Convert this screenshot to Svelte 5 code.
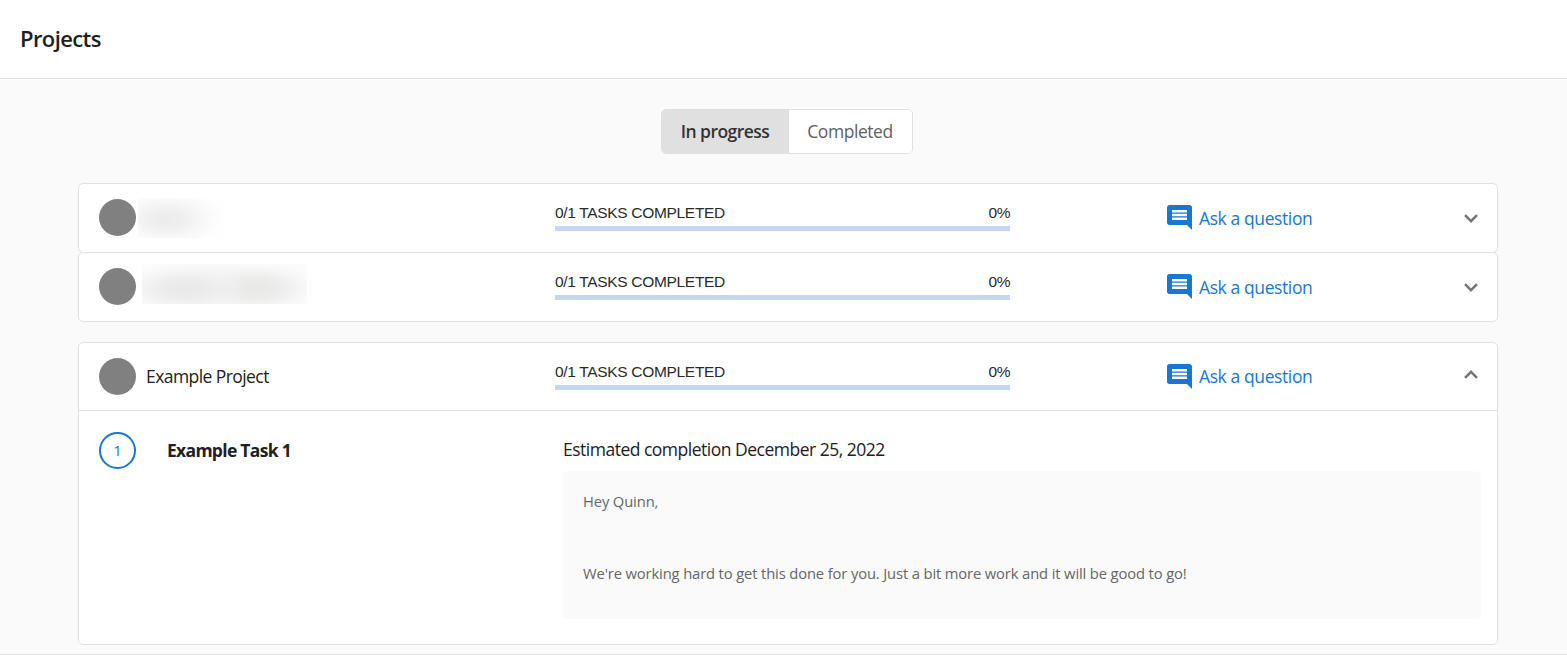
<script>
  const pending = [
    { id: 'a', hidden: 'short' },
    { id: 'b', hidden: 'long' }
  ];
  const paragraphs = [
    'Hey Quinn,',
    "We're working hard to get this done for you. Just a bit more work and it will be good to go!"
  ];
</script>

{#snippet row(name, hidden, open)}
  <div class="row">
    <div class="project">
      <span class="avatar"></span>
      {#if hidden}
        <span class="redacted {hidden}"></span>
      {:else}
        <span class="name">{name}</span>
      {/if}
    </div>
    <div class="progress">
      <div class="labels"><span>0/1 TASKS COMPLETED</span><span class="pct">0%</span></div>
      <div class="track"></div>
    </div>
    <div class="ask">
      <svg viewBox="2 2 20 20" width="25" height="25" aria-hidden="true">
        <path fill="#1976d2" d="M21.99 4c0-1.1-.89-2-1.99-2H4c-1.1 0-2 .9-2 2v12c0 1.1.9 2 2 2h14l4 4-.01-18zM18 14H6v-2h12v2zm0-3H6V9h12v2zm0-3H6V6h12v2z" />
      </svg>
      <span>Ask a question</span>
    </div>
    <svg class="chevron" class:open viewBox="0 0 14 9" width="14" height="9" aria-hidden="true">
      <path d="M1 1.2 7 7.2 13 1.2" fill="none" stroke="#757575" stroke-width="2.5" />
    </svg>
  </div>
{/snippet}

<div class="page">
  <header><h1>Projects</h1></header>
  <main>
    <div class="tabs">
      <button class="tab active"><span>In progress</span></button>
      <button class="tab"><span>Completed</span></button>
    </div>
    {#each pending as p (p.id)}
      <section class="card">{@render row('', p.hidden, false)}</section>
    {/each}
    <section class="card expanded">
      {@render row('Example Project', '', true)}
      <div class="task">
        <span class="number">1</span>
        <strong>Example Task 1</strong>
        <div class="details">
          <div class="estimate">Estimated completion December 25, 2022</div>
          <div class="note">
            {#each paragraphs as text}<p>{text}</p>{/each}
          </div>
        </div>
      </div>
    </section>
  </main>
</div>

<style>
  :global(body) { margin: 0; background: #fafafa; }
  .page, .page * { box-sizing: border-box; }
  .page {
    height: 655px;
    overflow: hidden;
    display: flex;
    flex-direction: column;
    background: #fafafa;
    border-bottom: 1px solid #e0e0e0;
    font-family: "Open Sans", "Noto Sans", sans-serif;
    font-size: 18px;
    color: #212121;
    white-space: nowrap;
  }
  header {
    height: 79px;
    flex: none;
    display: flex;
    align-items: center;
    padding: 0 20px 2px;
    background: #fff;
    border-bottom: 1px solid #e0e0e0;
  }
  h1 { margin: 0; font-size: 22px; line-height: 30px; font-weight: 600; letter-spacing: -0.6px; }
  main { flex: 1; display: flex; flex-direction: column; padding: 30px 69px 0 78px; }
  .tabs {
    align-self: center;
    display: flex;
    width: 252px;
    height: 45px;
    margin: 0 0 29px -3px;
    border: 1px solid #e0e0e0;
    border-radius: 5px;
    overflow: hidden;
    flex: none;
  }
  .tab {
    width: 123px;
    padding: 0 0 2px;
    border: 0;
    background: #fff;
    font: inherit;
    font-size: 17.5px;
    letter-spacing: -0.45px;
    color: #616161;
  }
  .tab.active { width: 127px; background: #e0e0e0; color: #333; font-weight: 600; letter-spacing: -0.55px; }
  .card {
    flex: none;
    height: 70px;
    margin-bottom: -1px;
    border: 1px solid #e0e0e0;
    border-radius: 5px;
    background: #fff;
  }
  .expanded { height: 303px; margin-top: 21px; }
  .row {
    height: 68px;
    padding: 0 19px 0 20px;
    display: grid;
    grid-template-columns: 456px 455px 157px 1fr 14px;
    align-items: center;
  }
  .expanded .row { border-bottom: 1px solid #e0e0e0; }
  .project { display: flex; align-items: center; padding-bottom: 1px; }
  .expanded .project { padding-bottom: 0; }
  .avatar { width: 37px; height: 37px; border-radius: 50%; background: #808080; }
  .name { margin-left: 10px; padding-bottom: 2px; letter-spacing: -0.57px; font-size: 17.5px; }
  .redacted { height: 40px; }
  .short {
    margin-left: 2px;
    width: 88px;
    background: radial-gradient(56px 29px at 29px 21px, #ebebeb 0%, #efefef 30%, #f9f9f9 70%, #fefefe 100%);
  }
  .long {
    margin: -6px 0 0 6px;
    width: 165px;
    background:
      radial-gradient(64px 26px at 42px 25px, #e8e8e8 0%, rgb(234 234 234 / 0.75) 35%, rgb(242 242 242 / 0.3) 75%, rgb(242 242 242 / 0) 100%),
      radial-gradient(60px 26px at 116px 24px, #e8e8e7 0%, rgb(233 233 232 / 0.75) 35%, rgb(242 242 242 / 0.3) 75%, rgb(242 242 242 / 0) 100%),
      radial-gradient(100px 26px at 80px 24px, #efefef 0%, #f4f4f4 50%, #fbfbfb 100%);
  }
  .progress { padding-bottom: 1px; }
  .expanded .progress { padding-bottom: 0; }
  .labels {
    display: flex;
    justify-content: space-between;
    font: 15.5px/18px "Liberation Sans", Arial, sans-serif;
    letter-spacing: -0.32px;
    color: #2a2a2a;
  }
  .pct { letter-spacing: -0.5px; }
  .track { height: 5px; margin-top: 4px; background: #c3d8f0; }
  .ask {
    grid-column: 4;
    display: flex;
    align-items: center;
    color: #1976d2;
    font-size: 17.5px;
    letter-spacing: -0.4px;
    padding-bottom: 2px;
  }
  .expanded .ask { padding-bottom: 1px; }
  .ask span { padding-top: 1px; }
  .expanded .ask span { padding-top: 0; }
  .ask svg { margin-right: 7px; }
  .chevron { display: block; margin-top: 1px; }
  .chevron.open { transform: rotate(180deg); margin-top: -5px; }
  .task {
    display: grid;
    grid-template-columns: 37px 365px 918px;
    padding: 21px 0 0 20px;
    column-gap: 31px;
  }
  .number {
    width: 37px;
    height: 37px;
    padding-bottom: 2px;
    border: 2px solid #1976d2;
    border-radius: 50%;
    display: grid;
    place-items: center;
    color: #1976d2;
    font-size: 15px;
  }
  .task strong { line-height: 37px; font-size: 17.5px; font-weight: 700; letter-spacing: -0.7px; }
  .estimate { line-height: 24px; margin-top: 5px; font-size: 17.5px; letter-spacing: -0.5px; }
  .note {
    height: 148px;
    margin-top: 10px;
    padding: 18px 20px;
    border-radius: 5px;
    background: #fafafa;
    color: #666;
    font-size: 14.75px;
    letter-spacing: -0.13px;
  }
  .note p { margin: 0 0 48px; line-height: 24px; }
</style>
